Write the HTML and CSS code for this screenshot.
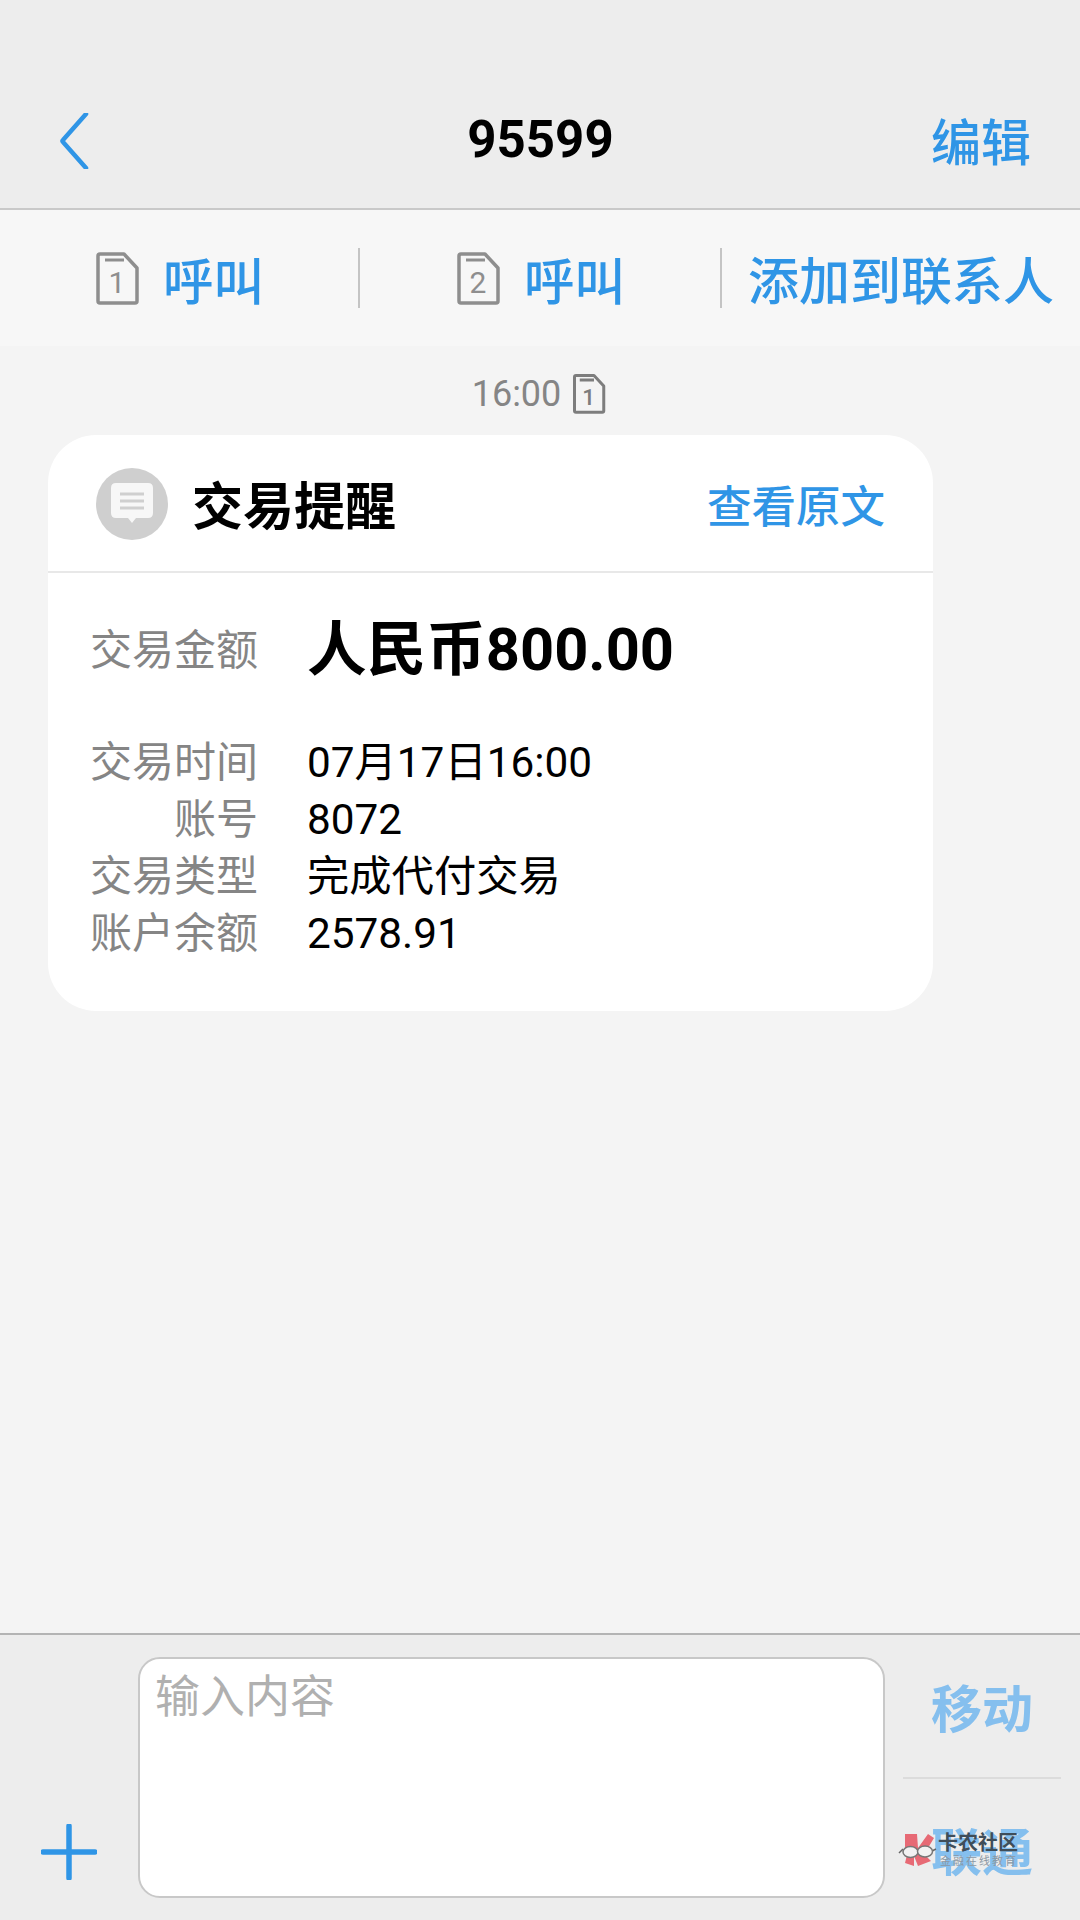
FILE: index.html
```html
<!DOCTYPE html>
<html lang="zh-CN">
<head>
    <meta charset="UTF-8">
    <meta name="viewport" content="width=device-width, initial-scale=1.0">
    <title>95599</title>
    <link rel="stylesheet" href="styles.css">
</head>
<body>

    <div class="phone">
        <header class="top-bar">
            <svg class="back-icon" viewBox="0 0 30 56" width="30" height="56">
                <path d="M27 1 L4 27 Q3 28 4 29 L27 55" />
            </svg>
            <div class="top-title">95599</div>
            <div class="top-edit">编辑</div>
        </header>

        <div class="action-bar">
            <div class="action">
                <svg class="sim-icon" viewBox="0 0 44 54" width="44" height="54">
                    <path class="sim-body" d="M4 3 H28 L41 17 V50 Q41 52 39 52 H4 Q2 52 2 50 V5 Q2 3 4 3 Z" />
                    <path class="sim-notch" d="M9 9 H28" />
                    <text class="sim-num" x="21" y="42">1</text>
                </svg>
                <span class="action-text">呼叫</span>
            </div>
            <div class="action">
                <svg class="sim-icon" viewBox="0 0 44 54" width="44" height="54">
                    <path class="sim-body" d="M4 3 H28 L41 17 V50 Q41 52 39 52 H4 Q2 52 2 50 V5 Q2 3 4 3 Z" />
                    <path class="sim-notch" d="M9 9 H28" />
                    <text class="sim-num" x="21" y="42">2</text>
                </svg>
                <span class="action-text">呼叫</span>
            </div>
            <div class="action action-add">
                <span class="action-text">添加到联系人</span>
            </div>
        </div>

        <main class="messages">
            <div class="msg-time">
                <span>16:00</span>
                <svg class="sim-icon-small" viewBox="0 0 44 54" width="33" height="41">
                    <path class="sim-body" d="M4 3 H28 L41 17 V50 Q41 52 39 52 H4 Q2 52 2 50 V5 Q2 3 4 3 Z" />
                    <path class="sim-notch" d="M9 9 H28" />
                    <text class="sim-num" x="21" y="42">1</text>
                </svg>
            </div>

            <div class="card">
                <div class="card-head">
                    <div class="card-avatar">
                        <svg viewBox="0 0 44 44" width="44" height="44">
                            <path class="bubble" d="M6 1 H38 Q43 1 43 6 V31 Q43 36 38 36 H26 L22 41 L18 36 H6 Q1 36 1 31 V6 Q1 1 6 1 Z" />
                            <path class="bubble-lines" d="M10 12 H34 M10 19 H34 M10 26 H34" />
                        </svg>
                    </div>
                    <div class="card-title">交易提醒</div>
                    <div class="card-link">查看原文</div>
                </div>
                <div class="card-body">
                    <div class="row row-amount">
                        <div class="row-label">交易金额</div>
                        <div class="row-amount-value">人民币800.00</div>
                    </div>
                    <div class="row">
                        <div class="row-label">交易时间</div>
                        <div class="row-value">07月17日16:00</div>
                    </div>
                    <div class="row">
                        <div class="row-label">账号</div>
                        <div class="row-value">8072</div>
                    </div>
                    <div class="row">
                        <div class="row-label">交易类型</div>
                        <div class="row-value">完成代付交易</div>
                    </div>
                    <div class="row">
                        <div class="row-label">账户余额</div>
                        <div class="row-value">2578.91</div>
                    </div>
                </div>
            </div>
        </main>

        <footer class="bottom-bar">
            <div class="plus-wrap">
                <svg viewBox="0 0 56 56" width="56" height="56">
                    <path class="plus-icon" d="M28 2 V54 M2 28 H54" />
                </svg>
            </div>
            <div class="input-box">输入内容</div>
            <div class="send-col">
                <div class="send-btn">移动</div>
                <div class="send-btn">联通</div>
            </div>
        </footer>

        <!-- forum watermark sits on top of the second send button -->
        <div class="watermark">
            <svg viewBox="0 0 40 40" width="40" height="40">
                <path class="wm-red" d="M7 2 L19 2 L20 16 L30 2 L36 6 L30 16 L27 23 L33 29 L20 34 L16 24 L16 34 L7 31 L9 23 L7 16 Z" />
                <path class="wm-arm" d="M1 21 L5 17 M34 19 L38 17" />
                <ellipse class="wm-lens" cx="12.5" cy="20" rx="7.5" ry="5.5" />
                <ellipse class="wm-lens" cx="27" cy="19.5" rx="7.5" ry="5.5" />
            </svg>
            <div class="wm-text">
                <div class="wm-name">卡农社区</div>
                <div class="wm-sub">金融在线教育</div>
            </div>
        </div>
    </div>

</body>
</html>
```

FILE: styles.css
```css
* {
    box-sizing: border-box;
    margin: 0;
    padding: 0;
}

body {
    font-family: Roboto, "Noto Sans CJK SC", "Noto Sans", sans-serif;
    background-color: #f4f4f4;
}

.phone {
    position: relative;
    width: 1080px;
    height: 1920px;
    display: flex;
    flex-direction: column;
    overflow: hidden;
}

/* top bar */
.top-bar {
    height: 210px;
    padding: 70px 49px 0 50px;
    display: grid;
    grid-template-columns: 1fr auto 1fr;
    align-items: center;
    background-color: #ededed;
    border-bottom: 2px solid #c9c9c9;
}

.back-icon {
    margin: 4px 0 0 9px;
}

.back-icon path {
    fill: none;
    stroke: #2f95e6;
    stroke-width: 4.5;
    stroke-linecap: round;
    stroke-linejoin: round;
}

.top-title {
    font-size: 51px;
    font-weight: bold;
    color: #000;
}

.top-edit {
    justify-self: end;
    font-size: 50px;
    font-weight: 500;
    color: #2f95e6;
}

/* call buttons */
.action-bar {
    height: 136px;
    display: grid;
    grid-template-columns: 360px 362px 1fr;
    align-items: center;
    background-color: #f7f7f7;
}

.action {
    height: 60px;
    padding-left: 2px;
    display: flex;
    align-items: center;
    justify-content: center;
    gap: 23px;
    border-right: 2px solid #c4c4c4;
}

.action-add {
    border-right: none;
    justify-content: flex-start;
    padding-left: 26px;
}

.action-text {
    font-size: 50.5px;
    font-weight: 500;
    color: #2f95e6;
    white-space: nowrap;
}

.action-add .action-text {
    font-size: 51px;
}

.sim-body {
    fill: none;
    stroke: #8e8e8e;
    stroke-width: 3.5;
    stroke-linejoin: round;
}

.sim-notch {
    stroke: #8e8e8e;
    stroke-width: 3;
}

.sim-num {
    font-size: 30px;
    fill: #8e8e8e;
    text-anchor: middle;
}

.sim-icon-small .sim-body,
.sim-icon-small .sim-notch {
    stroke: #7d7d7d;
    stroke-width: 4;
}

.sim-icon-small .sim-num {
    font-weight: 500;
    fill: #7d7d7d;
}

/* messages */
.messages {
    flex: 1;
    padding: 16px 0 0 48px;
}

.msg-time {
    width: 982px;
    height: 63px;
    margin-bottom: 10px;
    display: flex;
    align-items: center;
    justify-content: center;
    gap: 12px;
    font-size: 36px;
    color: #858585;
}

.card {
    width: 885px;
    height: 576px;
    background-color: #fff;
    border-radius: 48px;
}

.card-head {
    height: 138px;
    padding: 0 48px;
    display: flex;
    align-items: center;
    border-bottom: 2px solid #e8e8e8;
}

.card-avatar {
    width: 72px;
    height: 72px;
    margin-top: 2px;
    border-radius: 50%;
    background-color: #cfcfcf;
    display: flex;
    align-items: center;
    justify-content: center;
}

.bubble {
    fill: #f7f7f7;
}

.bubble-lines {
    stroke: #cfcfcf;
    stroke-width: 3;
}

.card-title {
    margin-left: 24px;
    font-size: 51px;
    font-weight: bold;
    color: #000;
}

.card-link {
    margin-left: auto;
    font-size: 44.5px;
    font-weight: 500;
    color: #2f95e6;
}

.card-body {
    padding-top: 41px;
}

.row {
    height: 57px;
    display: flex;
    align-items: center;
    line-height: 57px;
}

.row-amount {
    height: 72px;
    margin-bottom: 48px;
}

.row-label {
    width: 210px;
    text-align: right;
    font-size: 42px;
    color: #858585;
}

.row-value {
    margin-left: 49px;
    font-size: 42.3px;
    color: #000;
}

.row-amount-value {
    margin-left: 49px;
    font-size: 59.6px;
    font-weight: bold;
    color: #000;
}

/* bottom input */
.bottom-bar {
    height: 287px;
    display: flex;
    background-color: #ededed;
    border-top: 2px solid #b4b4b4;
    padding: 22px 19px 22px 0;
}

.plus-wrap {
    width: 138px;
    display: flex;
    align-items: flex-end;
    padding: 0 0 18px 41px;
}

.plus-icon {
    fill: none;
    stroke: #2f95e6;
    stroke-width: 5.5;
    stroke-linecap: round;
}

.input-box {
    width: 747px;
    background-color: #fff;
    border: 2px solid #c8c8c8;
    border-radius: 22px;
    padding: 2px 15px;
    font-size: 45px;
    color: #b0b0b0;
}

.send-col {
    flex: 1;
    margin: -22px 0 -22px 18px;
    display: flex;
    flex-direction: column;
}

.send-btn {
    flex: 1;
    display: flex;
    align-items: center;
    justify-content: center;
    font-size: 51px;
    font-weight: bold;
    color: #85bfee;
}

.send-btn + .send-btn {
    border-top: 2px solid #dcdcdc;
}

/* watermark */
.watermark {
    position: absolute;
    left: 898px;
    top: 1832px;
    display: flex;
    align-items: flex-start;
}

.wm-red {
    fill: #e76a75;
}

.wm-arm {
    fill: none;
    stroke: #666;
    stroke-width: 1.5;
}

.wm-lens {
    fill: #f2f2f2;
    stroke: #777;
    stroke-width: 1.5;
}

.wm-name {
    font-size: 20px;
    line-height: 22px;
    font-weight: bold;
    color: #3f4d59;
}

.wm-sub {
    margin: 1px 0 0 2px;
    font-size: 11px;
    line-height: 14px;
    letter-spacing: 2px;
    color: #8b97a3;
}
```
